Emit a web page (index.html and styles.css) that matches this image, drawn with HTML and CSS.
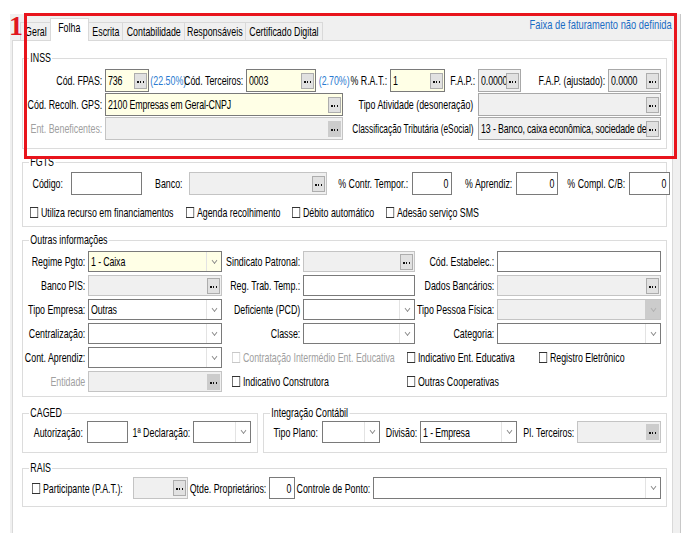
FILE: index.html
```html
<!DOCTYPE html>
<html lang="pt-BR">
<head>
<meta charset="utf-8">
<title>Folha</title>
<link rel="stylesheet" href="styles.css">
</head>
<body>
<div class="screen">
  <div class="window">
    <div class="tabbar">
      <div class="tabs">
        <span class="tab t-geral"><span class="tx">Geral</span></span>
        <span class="tab active t-folha"><span class="tx">Folha</span></span>
        <span class="tab t-escrita"><span class="tx">Escrita</span></span>
        <span class="tab t-contab"><span class="tx">Contabilidade</span></span>
        <span class="tab t-resp"><span class="tx">Responsáveis</span></span>
        <span class="tab t-cert"><span class="tx">Certificado Digital</span></span>
      </div>
      <span class="faixa">Faixa de faturamento não definida</span>
    </div>
    <div class="panel">
      <!-- INSS -->
      <div class="grp g-inss">
        <div class="title">INSS</div>
        <div class="rows r23 first-inss">
          <div class="row">
            <span class="lbl w82">Cód. FPAS:</span>
            <div class="fld yel w44"><span class="val">736</span><span class="btn"></span></div>
            <span class="pct w35">(22.50%)</span>
            <span class="lbl w62">Cód. Terceiros:</span>
            <div class="fld yel w70"><span class="val">0003</span><span class="btn"></span></div>
            <span class="pct w33 pl3">(2.70%)</span>
            <span class="lbl w41">% R.A.T.:</span>
            <div class="fld yel w55"><span class="val">1</span><span class="btn"></span></div>
            <span class="lbl w33">F.A.P.:</span>
            <div class="fld ro w43"><span class="val">0.0000</span><span class="btn"></span></div>
            <span class="lbl w87">F.A.P. (ajustado):</span>
            <div class="fld ro w53"><span class="val">0.0000</span><span class="btn"></span></div>
          </div>
          <div class="row">
            <span class="lbl w82">Cód. Recolh. GPS:</span>
            <div class="fld yel w238"><span class="val">2100 Empresas em Geral-CNPJ</span><span class="btn"></span></div>
            <span class="lbl w135 pr5">Tipo Atividade (desoneração)</span>
            <div class="fld ro w183"><span class="val"></span><span class="btn"></span></div>
          </div>
          <div class="row">
            <span class="lbl w82 off">Ent. Beneficentes:</span>
            <div class="fld dis w238"><span class="val"></span><span class="btn dark"></span></div>
            <span class="lbl w135 pr5 nar">Classificação Tributária (eSocial)</span>
            <div class="fld ro w183"><span class="val">13 - Banco, caixa econômica, sociedade de crédito</span><span class="btn"></span></div>
          </div>
        </div>
      </div>

      <!-- FGTS -->
      <div class="grp g-fgts">
        <div class="title">FGTS</div>
        <div class="row r23 first-fgts">
          <span class="lbl lbl-left w47">Código:</span>
          <div class="fld w71"><span class="val"></span></div>
          <span class="lbl w45 pr6">Banco:</span>
          <div class="fld dis w138"><span class="val"></span><span class="btn"></span></div>
          <span class="lbl w83">% Contr. Tempor.:</span>
          <div class="fld num w40"><span class="val">0</span></div>
          <span class="lbl w62">% Aprendiz:</span>
          <div class="fld num w42"><span class="val">0</span></div>
          <span class="lbl w69">% Compl. C/B:</span>
          <div class="fld num w41"><span class="val">0</span></div>
        </div>
        <div class="checks fgts-checks">
          <label class="chk w156"><span class="cb"></span>Utiliza recurso em financiamentos</label>
          <label class="chk w106"><span class="cb"></span>Agenda recolhimento</label>
          <label class="chk w94"><span class="cb"></span>Débito automático</label>
          <label class="chk"><span class="cb"></span>Adesão serviço SMS</label>
        </div>
      </div>

      <!-- Outras informações -->
      <div class="grp g-outras">
        <div class="title">Outras informações</div>
        <div class="rows r21 first-outras">
          <div class="row">
            <span class="lbl w65">Regime Pgto:</span>
            <div class="fld sel yel w134"><span class="val">1 - Caixa</span><span class="arrow"></span></div>
            <span class="lbl w81">Sindicato Patronal:</span>
            <div class="fld dis w112"><span class="val"></span><span class="btn"></span></div>
            <span class="lbl w82">Cód. Estabelec.:</span>
            <div class="fld w164"><span class="val"></span></div>
          </div>
          <div class="row">
            <span class="lbl w65">Banco PIS:</span>
            <div class="fld dis w134"><span class="val"></span><span class="btn"></span></div>
            <span class="lbl w81">Reg. Trab. Temp.:</span>
            <div class="fld w112"><span class="val"></span></div>
            <span class="lbl w82">Dados Bancários:</span>
            <div class="fld dis w164"><span class="val"></span><span class="btn"></span></div>
          </div>
          <div class="row">
            <span class="lbl w65">Tipo Empresa:</span>
            <div class="fld sel w134"><span class="val">Outras</span><span class="arrow"></span></div>
            <span class="lbl w81">Deficiente (PCD)</span>
            <div class="fld sel w112"><span class="val"></span><span class="arrow"></span></div>
            <span class="lbl w82">Tipo Pessoa Física:</span>
            <div class="fld sel dis w164"><span class="val"></span><span class="arrow dark"></span></div>
          </div>
          <div class="row">
            <span class="lbl w65">Centralização:</span>
            <div class="fld sel w134"><span class="val"></span><span class="arrow"></span></div>
            <span class="lbl w81">Classe:</span>
            <div class="fld sel w112"><span class="val"></span><span class="arrow"></span></div>
            <span class="lbl w82">Categoria:</span>
            <div class="fld sel w164"><span class="val"></span><span class="arrow"></span></div>
          </div>
          <div class="row">
            <span class="lbl w65">Cont. Aprendiz:</span>
            <div class="fld sel w134"><span class="val"></span><span class="arrow"></span></div>
            <div class="checks row-checks">
              <label class="chk off w175"><span class="cb"></span>Contratação Intermédio Ent. Educativa</label>
              <label class="chk w132"><span class="cb"></span>Indicativo Ent. Educativa</label>
              <label class="chk"><span class="cb"></span>Registro Eletrônico</label>
            </div>
          </div>
          <div class="row">
            <span class="lbl w65 off">Entidade</span>
            <div class="fld dis w134"><span class="val"></span><span class="btn dark"></span></div>
            <div class="checks row-checks">
              <label class="chk w175"><span class="cb"></span>Indicativo Construtora</label>
              <label class="chk"><span class="cb"></span>Outras Cooperativas</label>
            </div>
          </div>
        </div>
      </div>

      <!-- CAGED + Integração -->
      <div class="pair">
        <div class="grp g-caged">
          <div class="title">CAGED</div>
          <div class="row r22 first-pair">
            <span class="lbl w64 pr4">Autorização:</span>
            <div class="fld w41"><span class="val"></span></div>
            <span class="lbl w65">1ª Declaração:</span>
            <div class="fld sel w58"><span class="val"></span><span class="arrow"></span></div>
          </div>
        </div>
        <div class="grp g-integ">
          <div class="title">Integração Contábil</div>
          <div class="row r22 first-pair">
            <span class="lbl w58 pr4">Tipo Plano:</span>
            <div class="fld sel w58"><span class="val"></span><span class="arrow"></span></div>
            <span class="lbl w40">Divisão:</span>
            <div class="fld sel w97"><span class="val">1 - Empresa</span><span class="arrow"></span></div>
            <span class="lbl w60">Pl. Terceiros:</span>
            <div class="fld dis w84"><span class="val"></span><span class="btn dark"></span></div>
          </div>
        </div>
      </div>

      <!-- RAIS -->
      <div class="grp g-rais">
        <div class="title">RAIS</div>
        <div class="row r22 first-rais">
          <label class="chk w101 ml9"><span class="cb"></span>Participante (P.A.T.):</label>
          <div class="fld dis w55"><span class="val"></span><span class="btn"></span></div>
          <span class="lbl w81">Qtde. Proprietários:</span>
          <div class="fld num w26"><span class="val">0</span></div>
          <span class="lbl w78">Controle de Ponto:</span>
          <div class="fld sel w288"><span class="val"></span><span class="arrow"></span></div>
        </div>
      </div>
    </div>
  </div>
  <div class="marker">1</div>
  <div class="highlight"></div>
</div>
</body>
</html>
```

FILE: styles.css
```css
* { box-sizing: border-box; }

:root { --sx: 0.68; }

body {
  margin: 0;
  background: #ffffff;
  font-family: "Liberation Sans", Arial, sans-serif;
  font-size: 13px;
  color: #000;
}

.screen {
  position: relative;
  width: 687px;
  height: 533px;
  overflow: hidden;
  padding-top: 14px;
}

/* window */
.window {
  margin-left: 10px;
  width: 671px;
  height: 540px;
  background: #f0f0f0;
  border-right: 1px solid #c8c8c8;
  padding-left: 2px;
  display: flex;
  flex-direction: column;
}

.tabbar {
  height: 26px;
  flex: none;
  display: flex;
  align-items: flex-end;
}

.tabs {
  display: flex;
  align-items: flex-end;
  margin-left: 8px;
}

.tab {
  height: 18px;
  border: 1px solid #d9d9d9;
  border-bottom: none;
  margin-left: -1px;
  display: flex;
  align-items: center;
  justify-content: center;
  background: #f0f0f0;
  white-space: nowrap;
}

.tab .tx {
  display: inline-block;
  transform: scaleX(var(--sx));
}

.tab.active {
  height: 23px;
  margin-bottom: -1px;
  padding-bottom: 5px;
  background: #ffffff;
  position: relative;
  z-index: 1;
}

.t-geral { width: 31px; margin-left: 0; }
.t-folha { width: 39px; }
.t-escrita { width: 35px; }
.t-contab { width: 63px; }
.t-resp { width: 62px; }
.t-cert { width: 78px; }

.faixa {
  --sx: 0.72;
  margin-left: auto;
  align-self: flex-start;
  margin-top: 4px;
  padding-right: 12px;
  color: #1a6cc4;
  line-height: 13px;
  white-space: nowrap;
  transform: scaleX(var(--sx));
  transform-origin: 100% 50%;
}

.panel {
  flex: 1;
  width: 661px;
  border: 1px solid #d9d9d9;
  background: #ffffff;
  padding: 0 5px 0 9px;
}

/* group boxes */
.grp {
  border: 1px solid #dcdcdc;
  background: #fff;
}

.title {
  margin: -7px 0 0 6px;
  padding: 0 2px;
  height: 12px;
  line-height: 12px;
  width: max-content;
  background: #fff;
  white-space: nowrap;
  transform: scaleX(var(--sx));
  transform-origin: 0 50%;
}

.g-inss { margin-top: 17px; padding-bottom: 8px; }
.g-fgts { margin-top: 13px; padding-bottom: 6px; }
.g-outras { margin-top: 13px; padding-bottom: 4px; }
.pair { margin-top: 16px; display: flex; gap: 5px; }
.g-caged { width: 236px; padding-bottom: 9px; }
.g-integ { width: 404px; padding-bottom: 9px; }
.g-rais { margin-top: 15px; padding-bottom: 7px; }

.rows { display: flex; flex-direction: column; }
.r23 { gap: 1px; }
.r23 .row, .row.r23 { height: 23px; }
.r21 { gap: 3px; }
.r21 .row { height: 21px; }
.row.r22 { height: 22px; }

.first-inss { margin-top: 5px; }
.first-fgts { margin-top: 4px; }
.first-outras { margin-top: 5px; }
.first-pair { margin-top: 2px; }
.first-rais { margin-top: 3px; }

.row {
  display: flex;
  align-items: stretch;
}

/* labels (condensed text) */
.lbl {
  flex: none;
  display: flex;
  align-items: center;
  justify-content: flex-end;
  padding-right: 4px;
  white-space: nowrap;
  transform: scaleX(var(--sx));
  transform-origin: 100% 50%;
}
.lbl-left { justify-content: flex-start; padding-left: 14px; transform-origin: 0 50%; }
.nar { --sx: 0.64; }
.pr4 { padding-right: 6px; }
.pr5 { padding-right: 7px; }
.pr6 { padding-right: 8px; }
.off { color: #a0a0a0; }

.pct {
  flex: none;
  display: flex;
  align-items: center;
  padding-left: 2px;
  color: #2a7ad0;
  white-space: nowrap;
  transform: scaleX(var(--sx));
  transform-origin: 0 50%;
}
.pl3 { padding-left: 4px; }

/* fields */
.fld {
  --aux: 0px;
  flex: none;
  display: flex;
  align-items: center;
  border: 1px solid #7a7a7a;
  background: #ffffff;
  overflow: hidden;
}
.fld:has(.btn) { --aux: 14px; }
.fld:has(.arrow) { --aux: 15px; }
.fld.yel { background: #ffffe6; }
.fld.ro { background: #f0f0f0; border-color: #a8a8a8; }
.fld.dis { background: #f0f0f0; border-color: #c4c4c4; }
.fld.num .val { text-align: right; padding-right: 4px; }

.val {
  flex: none;
  width: calc((100% - var(--aux)) / var(--sx));
  margin-right: calc((100% - var(--aux)) * (1 - 1 / var(--sx)));
  padding-left: 3px;
  letter-spacing: -0.2px;
  white-space: nowrap;
  overflow: hidden;
  transform: scaleX(var(--sx));
  transform-origin: 0 50%;
}

.btn {
  flex: none;
  width: 13px;
  height: 16px;
  margin-right: 1px;
  border: 1px solid #adadad;
  background: #e1e1e1;
  display: flex;
  align-items: center;
  justify-content: center;
  padding-top: 2px;
}
.btn::after {
  content: "";
  width: 7px;
  height: 2px;
  background: repeating-linear-gradient(to right, #111 0 1.6px, transparent 1.6px 2.8px);
}
.btn.dark { background: #cccccc; border-color: #cccccc; }

.arrow {
  flex: none;
  align-self: stretch;
  width: 15px;
  border-left: 1px solid #e3e3e3;
  display: flex;
  align-items: center;
  justify-content: center;
}
.arrow::after {
  content: "";
  width: 4px;
  height: 4px;
  margin-top: -3px;
  border-right: 1px solid #8a8a8a;
  border-bottom: 1px solid #8a8a8a;
  transform: scaleX(0.8) rotate(45deg);
}
.arrow.dark { background: #cccccc; border-left-color: #cccccc; }
.arrow.dark::after { border-color: #b0b0b0; }

/* checkboxes */
.checks { display: flex; align-items: center; }
.fgts-checks { margin: 10px 0 0 7px; height: 15px; }
.row-checks { margin-left: 10px; }

.chk {
  flex: none;
  display: flex;
  align-items: center;
  white-space: nowrap;
  transform: scaleX(var(--sx));
  transform-origin: 0 50%;
}
.chk .cb {
  flex: none;
  width: 12px;
  height: 11px;
  border: 1px solid #333333;
  background: #fff;
  margin-right: 4px;
}
.chk.off { color: #a0a0a0; }
.chk.off .cb { border-color: #c8c8c8; }
.ml9 { margin-left: 9px; }

/* widths */
.w26 { width: 26px; }
.w33 { width: 33px; }
.w35 { width: 35px; }
.w40 { width: 40px; }
.w41 { width: 41px; }
.w42 { width: 42px; }
.w43 { width: 43px; }
.w44 { width: 44px; }
.w45 { width: 45px; }
.w47 { width: 47px; }
.w53 { width: 53px; }
.w55 { width: 55px; }
.w58 { width: 58px; }
.w60 { width: 60px; }
.w62 { width: 62px; }
.w64 { width: 64px; }
.w65 { width: 65px; }
.w69 { width: 69px; }
.w70 { width: 70px; }
.w71 { width: 71px; }
.w78 { width: 78px; }
.w81 { width: 81px; }
.w82 { width: 82px; }
.w83 { width: 83px; }
.w84 { width: 84px; }
.w87 { width: 87px; }
.w94 { width: 94px; }
.w97 { width: 97px; }
.w101 { width: 101px; }
.w106 { width: 106px; }
.w112 { width: 112px; }
.w132 { width: 132px; }
.w134 { width: 134px; }
.w135 { width: 135px; }
.w138 { width: 138px; }
.w156 { width: 156px; }
.w164 { width: 164px; }
.w175 { width: 175px; }
.w183 { width: 183px; }
.w238 { width: 238px; }
.w288 { width: 288px; }

/* annotation overlays */
.marker {
  position: absolute;
  left: 9px;
  top: 12px;
  font-family: "Liberation Serif", serif;
  font-size: 28px;
  font-weight: bold;
  line-height: 28px;
  color: #e0161e;
}

.highlight {
  position: absolute;
  left: 24px;
  top: 13px;
  width: 653px;
  height: 146px;
  border: 3px solid #e8141c;
  pointer-events: none;
}
```
